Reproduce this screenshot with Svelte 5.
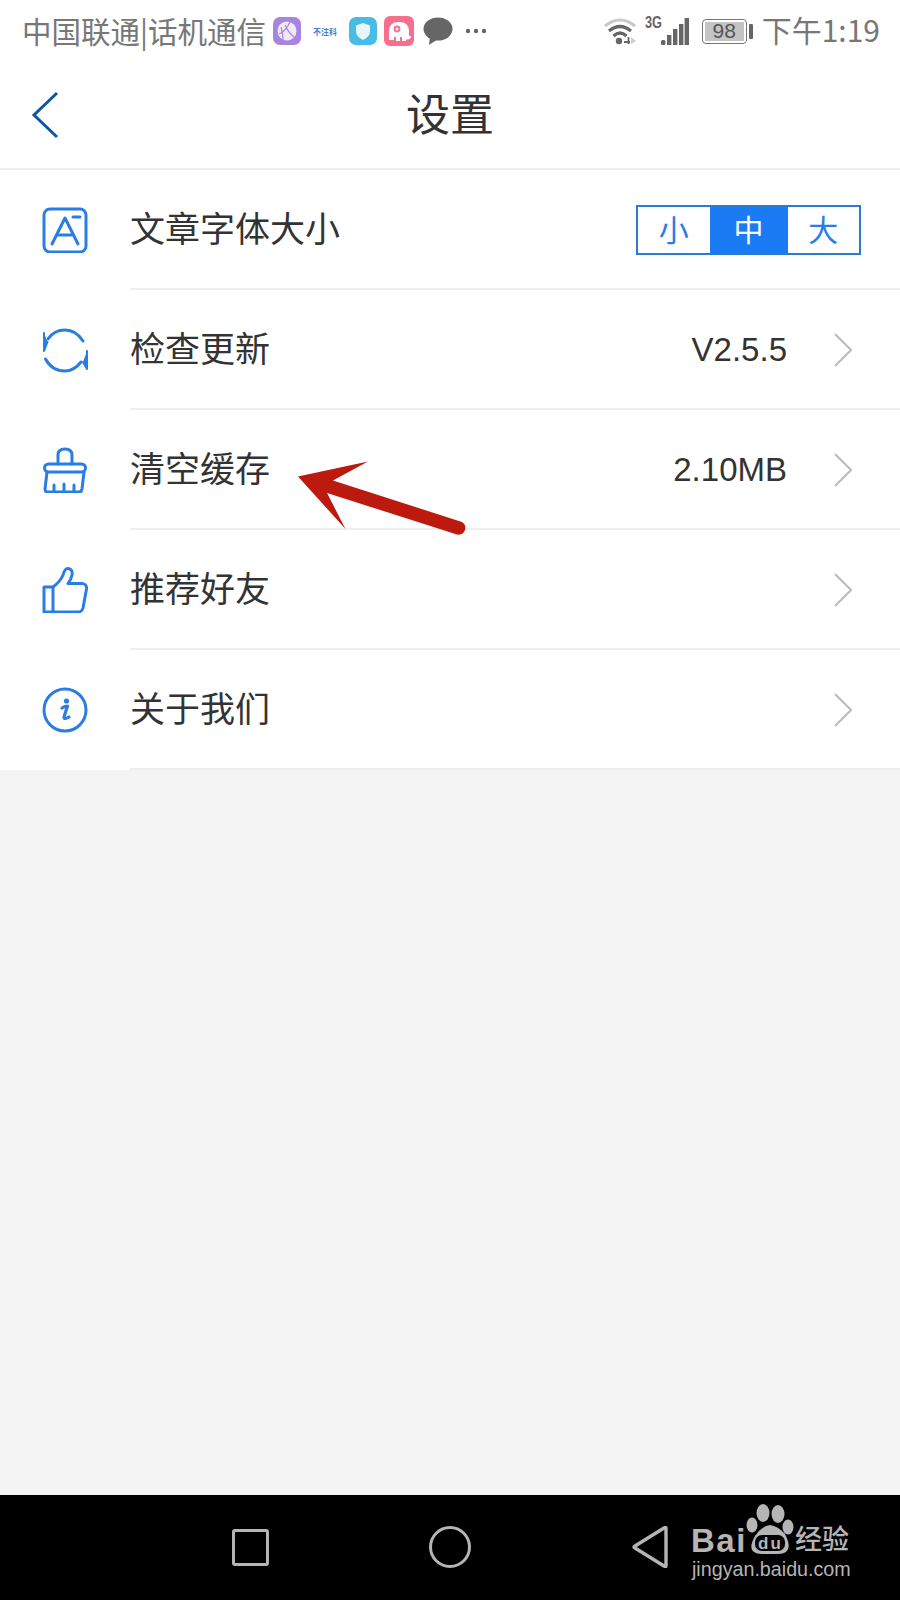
<script>
  const rows = [
    { key: 'font', label: '文章字体大小' },
    { key: 'update', label: '检查更新', value: 'V2.5.5', arrow: true },
    { key: 'clear', label: '清空缓存', value: '2.10MB', arrow: true },
    { key: 'like', label: '推荐好友', arrow: true },
    { key: 'info', label: '关于我们', arrow: true }
  ];
</script>

<div class="page">
  <div class="status">
    <span class="carrier">中国联通|话机通信</span>
    <svg class="n1" width="28" height="28" viewBox="0 0 28 28"><rect width="28" height="28" rx="7" fill="#a784e0"/><circle cx="14" cy="14" r="9.5" fill="#efe8fa"/><path d="M6 17 Q13 14 17 5 M12 8 Q15 15 21 20 M8 10 Q10 17 10 23" stroke="#a784e0" stroke-width="1.2" fill="none"/></svg>
    <span class="mini">不注科</span>
    <svg class="n3" width="28" height="28" viewBox="0 0 28 28"><rect width="28" height="28" rx="7" fill="#47bde6"/><path d="M14 6 L21 8.5 V14 Q21 20 14 23 Q7 20 7 14 V8.5 Z" fill="#e8f6fb"/></svg>
    <svg class="n4" width="30" height="30" viewBox="0 0 30 30"><rect width="30" height="30" rx="6" fill="#f5708f"/><path d="M5 24 V15 Q5 6 15 6 Q25 6 25 15 V19 Q25.5 21 27 20 Q27 24 22 23.5 V25 H18 V21 H16 V25 H12 V21 H10 V24 Z" fill="#fff"/><circle cx="13" cy="13" r="3.4" fill="#f5708f"/><circle cx="13" cy="13" r="1.5" fill="#fff"/></svg>
    <svg class="n5" width="30" height="28" viewBox="0 0 30 28"><ellipse cx="15" cy="12" rx="14.5" ry="11.5" fill="#666"/><path d="M7 19 L6 28 L15 22 Z" fill="#666"/></svg>
    <svg class="n6" width="22" height="6" viewBox="0 0 22 6"><circle cx="3" cy="3" r="2.2" fill="#666"/><circle cx="11" cy="3" r="2.2" fill="#666"/><circle cx="19" cy="3" r="2.2" fill="#666"/></svg>
    <span class="grow"></span>
    <svg class="wifi" width="34" height="28" viewBox="0 0 34 28"><path d="M2 9 Q17 -3 32 9" stroke="#c9c9c9" stroke-width="3" fill="none"/><path d="M6 14 Q17 5 28 14" stroke="#666" stroke-width="3.2" fill="none"/><path d="M10.5 19 Q17 13 23.5 19" stroke="#666" stroke-width="3.2" fill="none"/><circle cx="16" cy="24" r="3.2" fill="#666"/><path d="M21 25 h6 M25.5 20 v7" stroke="#666" stroke-width="1.8" fill="none"/><path d="M28 20 L33 24 L28 27 Z" fill="#ccc"/></svg>
    <span class="sig">
      <span class="g3">3G</span>
      <svg width="28" height="27" viewBox="0 0 28 27"><rect x="0" y="22" width="4.4" height="5" rx="1.5" fill="#666"/><rect x="6" y="17" width="4.4" height="10" fill="#666"/><rect x="12" y="11" width="4.4" height="16" fill="#666"/><rect x="18" y="6" width="4.4" height="21" fill="#666"/><rect x="23.6" y="0" width="4.4" height="27" fill="#666"/></svg>
    </span>
    <span class="battery"><span class="level">98</span></span>
    <span class="tip"></span>
    <span class="time">下午1:19</span>
  </div>

  <div class="nav">
    <svg class="back" width="30" height="48" viewBox="0 0 30 48"><path d="M27 2 L4 24 L27 46" stroke="#0f559f" stroke-width="3" fill="none"/></svg>
    <span class="title">设置</span>
  </div>

  <div class="list">
    {#each rows as r}
      <div class="row">
        <span class="icon">
          {#if r.key === 'font'}
            <svg width="46" height="46" viewBox="0 0 46 46" fill="none" stroke="#2a7de1" stroke-width="3" stroke-linecap="round" stroke-linejoin="round"><rect x="2" y="2" width="42" height="43" rx="6"/><path d="M10 37 L23 11 L36 37 M15 28 H31"/><path d="M31 10 H38"/></svg>
          {:else if r.key === 'update'}
            <svg width="46" height="46" viewBox="0 0 46 46" fill="none" stroke="#2a7de1" stroke-width="3" stroke-linecap="round" stroke-linejoin="round"><path d="M6 12 Q12 3 23 3 Q34 3 41 14"/><path d="M3.5 32 Q10 44 23 44 Q32 44 39 35"/><path d="M2 6 V24 L5.5 15" fill="#2a7de1" stroke-width="2"/><path d="M45 24 V42 L41 35" fill="#2a7de1" stroke-width="2"/></svg>
          {:else if r.key === 'clear'}
            <svg width="46" height="46" viewBox="0 0 46 46" fill="none" stroke="#2a7de1" stroke-width="3" stroke-linecap="round" stroke-linejoin="round"><path d="M16 17 V8 Q16 2 23 2 Q30 2 30 8 V17"/><rect x="2.5" y="17" width="41" height="8" rx="4"/><path d="M5 25 L3 42 Q3 45 6 45 H37 Q39.5 45 40 42 L42 25"/><path d="M12 44 V38 M22 44 V37 M32 44 V38"/></svg>
          {:else if r.key === 'like'}
            <svg width="46" height="46" viewBox="0 0 46 46" fill="none" stroke="#2a7de1" stroke-width="3" stroke-linecap="round" stroke-linejoin="round"><path d="M2 20 H11 V45 H2 Z"/><path d="M11 20 Q18 15 21 8 Q23 1 26 1.5 Q31 2 30 8 Q29 13 26 16.5 H40 Q45 17 44.5 22 L41 41 Q40 45 36 45 H11"/></svg>
          {:else}
            <svg width="46" height="46" viewBox="0 0 46 46" fill="none"><circle cx="23" cy="23" r="21" stroke="#2a7de1" stroke-width="3"/><circle cx="24.5" cy="14" r="2.6" fill="#2a7de1"/><path d="M20 21 Q23 19 25.5 19 L22 30 Q22 33 27 30" stroke="#2a7de1" stroke-width="3.2" stroke-linecap="round" stroke-linejoin="round"/></svg>
          {/if}
        </span>
        <div class="body">
          <span class="label">{r.label}</span>
          {#if r.key === 'font'}
            <div class="seg"><span class="s">小</span><span class="s on">中</span><span class="s">大</span></div>
          {:else}
            {#if r.value}<span class="value">{r.value}</span>{/if}
            <svg class="chev" width="20" height="36" viewBox="0 0 20 36"><path d="M2 2 L18 18 L2 34" stroke="#bdbdbd" stroke-width="2.2" fill="none"/></svg>
          {/if}
        </div>
      </div>
    {/each}
  </div>

  <div class="rest"></div>

  <div class="sysnav">
    <span class="sq"></span>
    <span class="ci"></span>
    <svg class="tri" width="36" height="42" viewBox="0 0 36 42"><path d="M34 2 V40 Q34 41 32 40 L3 22 Q1 21 3 20 L32 2 Q34 1 34 2 Z" stroke="#b5b5b5" stroke-width="3.4" fill="none" stroke-linejoin="round"/></svg>
    <div class="mark">
      <svg class="paw" width="50" height="52" viewBox="0 0 50 52"><ellipse cx="18" cy="10" rx="6.5" ry="9" fill="#b5b5b5"/><ellipse cx="33" cy="11" rx="6.5" ry="9" fill="#b5b5b5"/><ellipse cx="7" cy="22" rx="5.5" ry="7.5" fill="#b5b5b5"/><ellipse cx="43" cy="24" rx="5.5" ry="7.5" fill="#b5b5b5"/><path d="M25 22 Q33 23 40 31 Q50 51 33 51 H17 Q0 51 10 33 Q17 23 25 22 Z" fill="#b5b5b5"/><rect x="10" y="32" width="30" height="16" rx="7" fill="#000"/></svg>
      <span class="bai">Bai</span>
      <span class="du">du</span>
      <span class="jy">经验</span>
      <span class="url">jingyan.baidu.com</span>
    </div>
  </div>

  <svg class="arrow" width="180" height="80" viewBox="296 458 180 80"><path d="M298 476.5 L368 461.5 L333 480.5 L462 522 Q466.5 525 465 530 Q463 535.5 457 534.5 L327 493 L345.5 529 Z" fill="#bc1a0e"/></svg>
</div>

<style>
  :global(body) { margin: 0; }
  .page {
    position: relative;
    width: 900px;
    height: 1600px;
    display: flex;
    flex-direction: column;
    background: #fff;
    overflow: hidden;
    font-family: "Noto Sans CJK SC", "Liberation Sans", sans-serif;
    color: #333;
  }
  .status {
    height: 62px;
    display: flex;
    align-items: center;
    padding-left: 22px;
    padding-right: 20px;
    color: #777;
    flex: none;
  }
  .carrier { font-size: 29.5px; width: 251px; white-space: nowrap; margin-bottom: 2px; }
  .n1 { flex: none; }
  .mini { font-size: 8px; color: #4a7fd0; width: 24px; margin-left: 12px; white-space: nowrap; font-weight: 700; }
  .n3 { margin-left: 12px; flex: none; }
  .n4 { margin-left: 7px; flex: none; }
  .n5 { margin-left: 9px; flex: none; }
  .n6 { margin-left: 12px; flex: none; }
  .grow { flex: 1; }
  .wifi { flex: none; }
  .sig { position: relative; width: 44px; height: 28px; margin-left: 8px; display: flex; justify-content: flex-end; align-items: flex-end; }
  .g3 { position: absolute; left: 0; top: -2px; font: 700 16px/16px "Liberation Sans", sans-serif; color: #666; transform: scaleX(.8); transform-origin: left; }
  .battery {
    box-sizing: border-box;
    width: 45px;
    height: 25px;
    margin-left: 13px;
    border: 1.5px solid #777;
    border-radius: 4px;
    padding: 2px;
    display: flex;
  }
  .level {
    flex: 1;
    background: #c4c4c4;
    color: #555;
    font: 21px/18px "Liberation Sans", sans-serif;
    text-align: center;
  }
  .tip { width: 4px; height: 15px; background: #666; margin-left: 2px; border-radius: 1px; }
  .time { font-size: 30px; color: #777; margin-left: 9px; margin-bottom: 4px; white-space: nowrap; }
  .nav {
    height: 108px;
    flex: none;
    box-sizing: border-box;
    border-bottom: 2px solid #ededed;
    display: flex;
    align-items: center;
    justify-content: center;
    position: relative;
  }
  .back { position: absolute; left: 30px; top: 29px; }
  .title { font-size: 44px; color: #333; line-height: 1; margin-bottom: 6px; }
  .list { flex: none; }
  .row { height: 120px; display: flex; align-items: stretch; }
  .icon { width: 130px; flex: none; box-sizing: border-box; padding-left: 42px; display: flex; align-items: center; }
  .body {
    flex: 1;
    box-sizing: border-box;
    border-bottom: 2px solid #efefef;
    display: flex;
    align-items: center;
    padding-right: 40px;
  }
  .label { font-size: 35px; color: #333; flex: 1; margin-bottom: 5px; }
  .value { font: 33px "Liberation Sans", sans-serif; color: #333; margin-right: 46px; margin-top: 2px; }
  .chev { flex: none; margin-top: 2px; margin-right: 7px; }
  .seg {
    display: flex;
    box-sizing: border-box;
    width: 225px;
    height: 50px;
    border: 2px solid #2b7ccf;
    margin-right: -1px;
    margin-top: 1px;
  }
  .s { flex: 1; display: flex; align-items: center; justify-content: center; font-size: 30px; color: #2a7de1; padding-bottom: 4px; box-sizing: border-box; }
  .s.on { background: #1a7bf5; color: #fff; flex: 0 0 78px; }
  .rest { flex: 1; background: #f4f4f4; }
  .sysnav { height: 105px; flex: none; background: #000; position: relative; display: flex; }
  .sq { position: absolute; left: 232px; top: 34px; box-sizing: border-box; width: 37px; height: 37px; border: 3.5px solid #b5b5b5; border-radius: 3px; }
  .ci { position: absolute; left: 429px; top: 31px; box-sizing: border-box; width: 42px; height: 42px; border: 3.5px solid #b5b5b5; border-radius: 50%; }
  .tri { position: absolute; left: 632px; top: 31px; }
  .mark { position: absolute; left: 691px; top: 8px; width: 160px; height: 78px; color: #b5b5b5; }
  .paw { position: absolute; left: 54px; top: 0; }
  .bai { position: absolute; left: 0; top: 18px; font: 700 33px/40px "Liberation Sans", sans-serif; letter-spacing: 1.5px; }
  .du { position: absolute; left: 67px; top: 32px; font: 700 17px/17px "Liberation Sans", sans-serif; letter-spacing: 2px; color: #b5b5b5; }
  .jy { position: absolute; left: 104px; top: 19px; font-size: 27px; line-height: 32px; font-weight: 500; white-space: nowrap; }
  .url { position: absolute; left: 1px; top: 54px; font: 19.7px/24px "Liberation Sans", sans-serif; white-space: nowrap; }
  .arrow { position: absolute; left: 296px; top: 458px; }
</style>
